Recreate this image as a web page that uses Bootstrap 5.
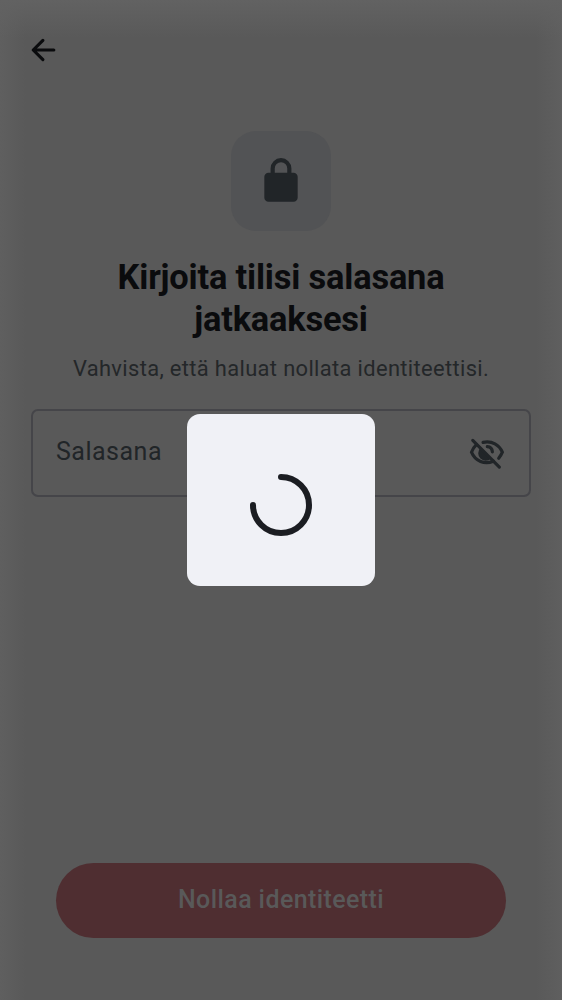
<!DOCTYPE html>
<html lang="fi">
<head>
<meta charset="utf-8">
<meta name="viewport" content="width=device-width, initial-scale=1">
<title>Nollaa identiteetti</title>
<link href="https://cdn.jsdelivr.net/npm/bootstrap@5.3.0/dist/css/bootstrap.min.css" rel="stylesheet">
<style>
body{font-family:Roboto,sans-serif;background:#595959;color:#0a0b0d}
.screen{height:1000px;padding:31px 31px 62.5px;overflow:hidden;background:linear-gradient(#626262,#59595900 38px),linear-gradient(90deg,#5f5f5f,#59595900 26px,#59595900 536px,#5f5f5f),#595959}
.back{width:38px;height:38px;margin-left:-6px;color:#0a0b0d}
.lock-tile{width:100px;height:100px;border-radius:25px;margin-top:62px;background:#525355;color:#212528}
.heading{font-size:34.4px;line-height:42px;font-weight:700;letter-spacing:-.18px;margin:25px 0 0}
.sub-text{font-size:21.9px;line-height:31px;letter-spacing:.35px;color:#242729;margin:13px 0 0}
.field{height:88px;border:2px solid #454549;border-radius:7px;margin-top:25px;padding:0 23px;color:#212528}
.field-label{font-size:25px;letter-spacing:.5px;line-height:36px;padding-bottom:3px}
.reset{height:75px;margin:0 25px;background:#4f2e31;color:#595959;border:0;font-size:25px;font-weight:500;letter-spacing:.4px}
.loader{width:188px;height:172px;padding-top:9px;border-radius:13px;background:#f0f1f6}
</style>
</head>
<body>
<main class="screen d-flex flex-column">
  <svg class="back" viewBox="0 0 24 24" fill="none" stroke="currentColor" stroke-width="2" stroke-linecap="round" stroke-linejoin="round"><path d="M18.200 12H5.200M11.300 5.900 5.200 12l6.100 6.100"/></svg>
  <div class="lock-tile d-flex align-items-center justify-content-center align-self-center">
    <svg width="50" height="50" viewBox="0 0 24 24" fill="currentColor"><path d="M6 22q-.824 0-1.412-.587A1.93 1.93 0 0 1 4 20V10q0-.825.588-1.412A1.93 1.93 0 0 1 6 8h1V6q0-2.075 1.463-3.537Q9.926 1 12 1t3.537 1.463T17 6v2h1q.824 0 1.413.588Q20 9.175 20 10v10q0 .824-.587 1.413A1.930 1.930 0 0 1 18 22zM9 8h6V6q0-1.250-.875-2.125A2.900 2.900 0 0 0 12 3q-1.250 0-2.125.875A2.900 2.900 0 0 0 9 6z"/></svg>
  </div>
  <h1 class="heading text-center">Kirjoita tilisi salasana<br>jatkaaksesi</h1>
  <p class="sub-text text-center">Vahvista, että haluat nollata identiteettisi.</p>
  <div class="field d-flex align-items-center justify-content-between">
    <span class="field-label">Salasana</span>
    <svg width="38" height="38" viewBox="0 0 24 24" fill="none" stroke="currentColor" stroke-width="2" stroke-linecap="round"><path d="M9.500 5.300C15.200 4.100 19.800 6.900 21.700 11.500q-.8 2-2.300 3.800M5.300 6.700Q3.200 8.700 2.200 11.500C4.600 17.300 10.500 19.500 16 17.200M12.200 8Q15.200 8.200 15.400 11.300"/><path d="M7.800 8.900A4.600 4.600 0 0 0 14.500 15.500Z" fill="currentColor" stroke="none"/><path d="M3 4.100 19.800 20.900"/></svg>
  </div>
  <button class="reset btn rounded-pill mt-auto" type="button">Nollaa identiteetti</button>
</main>
<div class="loader position-absolute top-50 start-50 translate-middle d-flex align-items-center justify-content-center" role="status" aria-label="Ladataan">
  <svg width="64" height="64" viewBox="0 0 64 64" fill="none" stroke="#1b1d22" stroke-width="6" stroke-linecap="round"><path d="M32 4a28 28 0 1 1-28 28"/></svg>
</div>
<script src="https://cdn.jsdelivr.net/npm/bootstrap@5.3.0/dist/js/bootstrap.bundle.min.js"></script>
</body>
</html>
